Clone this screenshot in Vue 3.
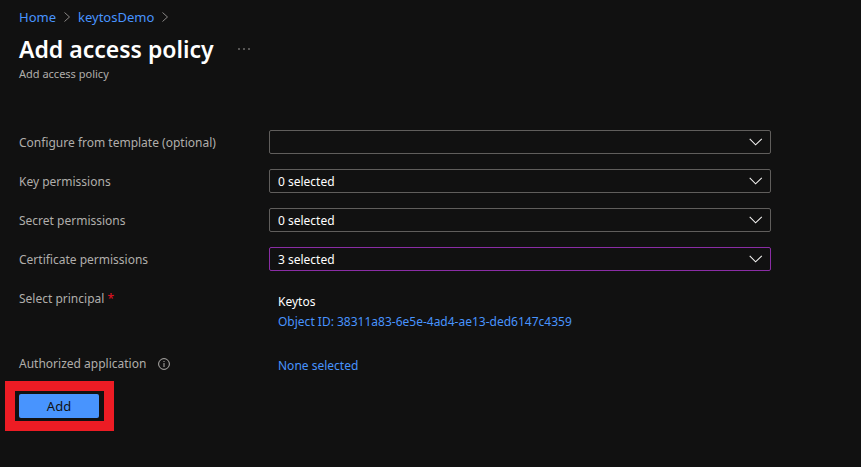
<script setup>
import { ref } from 'vue'

const fields = ref([
  { id: 'template', label: 'Configure from template (optional)', value: '' },
  { id: 'keys', label: 'Key permissions', value: '0 selected' },
  { id: 'secrets', label: 'Secret permissions', value: '0 selected' },
  { id: 'certificates', label: 'Certificate permissions', value: '3 selected', edited: true },
])
const crumbs = ['Home', 'keytosDemo']
</script>

<template>
  <main class="page">
    <nav class="crumbs" aria-label="Breadcrumb">
      <template v-for="crumb in crumbs" :key="crumb">
        <a href="#" class="link">{{ crumb }}</a>
        <svg class="crumb-arrow" viewBox="0 0 6 12" aria-hidden="true">
          <path d="M0.5 1.5 L5.5 6 L0.5 10.5" />
        </svg>
      </template>
    </nav>

    <header class="heading">
      <h1>Add access policy</h1>
      <button type="button" class="more" aria-label="More actions">
        <svg viewBox="0 0 12 2" aria-hidden="true">
          <circle cx="1" cy="1" r="0.8" />
          <circle cx="6" cy="1" r="0.8" />
          <circle cx="11" cy="1" r="0.8" />
        </svg>
      </button>
    </header>
    <p class="subtitle">Add access policy</p>

    <form class="form" @submit.prevent>
      <div v-for="field in fields" :key="field.id" class="row">
        <label :for="field.id" class="label">{{ field.label }}</label>
        <div class="dropdown">
          <select :id="field.id" v-model="field.value" :class="{ edited: field.edited }">
            <option :value="field.value">{{ field.value }}</option>
          </select>
          <svg class="chevron" viewBox="0 0 14 8" aria-hidden="true">
            <path d="M0.7 0.9 L6.6 6.8 L12.8 0.9" />
          </svg>
        </div>
      </div>

      <div class="row principal">
        <span class="label">Select principal <span class="required">*</span></span>
        <div class="value">
          <span>Keytos</span>
          <a href="#" class="link">Object ID: 38311a83-6e5e-4ad4-ae13-ded6147c4359</a>
        </div>
      </div>

      <div class="row">
        <span class="label with-icon">
          Authorized application
          <svg class="info" viewBox="0 0 12 12" aria-hidden="true">
            <circle cx="6" cy="6" r="5.4" />
            <path d="M6 5 V9 M6 3 V4" />
          </svg>
        </span>
        <div class="value">
          <a href="#" class="link">None selected</a>
        </div>
      </div>

      <div class="highlight">
        <button type="submit" class="add">Add</button>
      </div>
    </form>
  </main>
</template>

<style>
body {
  background: #111111;
}
</style>

<style scoped>
.page {
  padding: 7px 90px 0 19px;
  font-family: "Noto Sans", "Open Sans", sans-serif;
  font-size: 12px;
  line-height: 20px;
  color: #b0aeab;
}
.link {
  color: #4894fe;
  text-decoration: none;
}
.crumbs {
  display: flex;
  align-items: center;
  gap: 8px;
  font-size: 13px;
}
.crumb-arrow {
  width: 6px;
  height: 12px;
  fill: none;
  stroke: #8a8886;
}
.heading {
  display: flex;
  align-items: center;
  gap: 22px;
  padding-top: 6px;
}
h1 {
  margin: 0;
  font-size: 23px;
  line-height: 32px;
  font-weight: 600;
  color: #ffffff;
}
.more {
  display: flex;
  padding: 2px;
  border: 0;
  background: none;
}
.more svg {
  width: 12px;
  height: 2px;
  fill: #b0aeab;
}
.subtitle {
  margin: 0;
  font-size: 11px;
  line-height: 18px;
}
.form {
  display: flex;
  flex-direction: column;
  gap: 15px;
  padding-top: 47px;
}
.row {
  display: grid;
  grid-template-columns: 250px 1fr;
  line-height: 22px;
}
.label {
  padding-top: 2px;
}
.dropdown {
  position: relative;
}
select {
  display: block;
  width: 100%;
  height: 24px;
  padding: 2px 32px 0 8px;
  border: 1px solid #605e5c;
  border-radius: 2px;
  appearance: none;
  background: #111111;
  color: #ffffff;
  font: inherit;
  line-height: 20px;
}
select.edited {
  border-color: #8a2da5;
}
.chevron {
  position: absolute;
  top: 8px;
  right: 8px;
  width: 14px;
  height: 8px;
  fill: none;
  stroke: #f3f2f1;
  stroke-width: 1.1;
  pointer-events: none;
}
.value {
  display: flex;
  flex-direction: column;
  padding: 6px 9px 0;
  line-height: 20px;
  color: #ffffff;
}
.principal {
  padding-bottom: 3px;
}
.required {
  color: #e81123;
}
.with-icon {
  display: flex;
  align-items: center;
  gap: 12px;
}
.info {
  width: 12px;
  height: 12px;
  fill: none;
  stroke: #b0aeab;
}
.highlight {
  align-self: flex-start;
  margin: -10px 0 0 -14px;
  padding: 3px 5px 3px 4px;
  border: 10px solid #ed1c24;
}
.add {
  display: block;
  width: 80px;
  height: 24px;
  padding: 0;
  border: 0;
  border-radius: 2px;
  background: #4894fe;
  color: #111111;
  font: inherit;
  font-size: 13px;
  line-height: 24px;
}
</style>
